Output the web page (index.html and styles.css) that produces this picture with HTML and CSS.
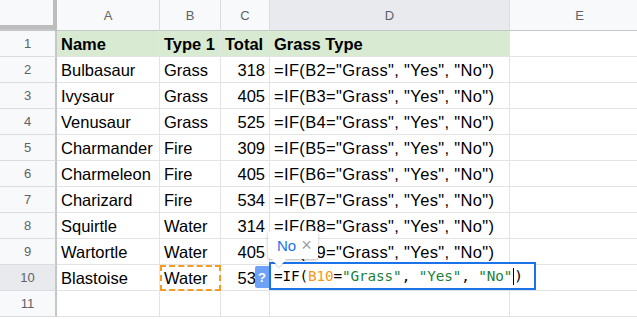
FILE: index.html
```html
<!DOCTYPE html>
<html lang="en">
<head>
    <meta charset="UTF-8">
    <meta name="viewport" content="width=device-width, initial-scale=1.0">
    <title>Pokemon Sheet</title>
    <link rel="stylesheet" href="styles.css">
</head>
<body>
    <div class="sheet" id="sheet">
        <div class="corner"></div>
        <div class="col-head">A</div>
        <div class="col-head">B</div>
        <div class="col-head">C</div>
        <div class="col-head active">D</div>
        <div class="col-head">E</div>
    </div>

    <script>
        // Rows of the sheet: name, type, total
        const rows = [
            ['Bulbasaur', 'Grass', 318],
            ['Ivysaur', 'Grass', 405],
            ['Venusaur', 'Grass', 525],
            ['Charmander', 'Fire', 309],
            ['Charmeleon', 'Fire', 405],
            ['Charizard', 'Fire', 534],
            ['Squirtle', 'Water', 314],
            ['Wartortle', 'Water', 405],
            ['Blastoise', 'Water', 530]
        ];

        function buildSheet() {
            const sheet = document.getElementById('sheet');
            let html = `
                <div class="row-head">1</div>
                <div class="cell head">Name</div>
                <div class="cell head">Type 1</div>
                <div class="cell head">Total</div>
                <div class="cell head">Grass Type</div>
                <div class="cell"></div>`;

            rows.forEach((item, i) => {
                const n = i + 2;
                const last = n === 10;
                let formula = `=IF(B${n}="Grass", "Yes", "No")`;
                if (last) {
                    formula = `
                        <div class="hint">No <span class="hint-x">×</span></div>
                        <div class="hint-q">?</div>
                        <div class="editor"><span>=IF(</span><span class="ref">B10</span><span>=</span><span class="str">"Grass"</span><span>, </span><span class="str">"Yes"</span><span>, </span><span class="str">"No"</span><span class="caret"></span><span>)</span></div>`;
                }
                html += `
                    <div class="row-head${last ? ' active' : ''}">${n}</div>
                    <div class="cell">${item[0]}</div>
                    <div class="cell${last ? ' copied' : ''}">${item[1]}</div>
                    <div class="cell num">${item[2]}</div>
                    <div class="cell formula">${formula}</div>
                    <div class="cell"></div>`;
            });

            html += `
                <div class="row-head">11</div>
                <div class="cell"></div>
                <div class="cell"></div>
                <div class="cell"></div>
                <div class="cell"></div>
                <div class="cell"></div>`;

            sheet.innerHTML += html;
        }

        buildSheet();
    </script>
</body>
</html>
```

FILE: styles.css
```css
/* Spreadsheet grid */
body {
    margin: 0;
    background: #fff;
    font-family: "Liberation Sans", Arial, sans-serif;
    overflow: hidden;
}
.sheet {
    display: grid;
    grid-template-columns: 57px 103px 61px 49px 240px 140px;
    grid-template-rows: 31px repeat(11, 26px);
}
.corner {
    position: relative;
    background: #f8f9fa;
    border-right: 4px solid #bdbdbd;
    border-bottom: 2px solid #c4c7c5;
}
.corner::after {
    content: "";
    position: absolute;
    left: 0;
    right: 0;
    top: 25px;
    height: 4px;
    background: #bdbdbd;
}
.col-head {
    display: flex;
    align-items: center;
    justify-content: center;
    background: #f8f9fa;
    color: #5f6368;
    font-size: 13px;
    border-right: 1px solid #dadce0;
    border-bottom: 1px solid #c4c7c5;
}
.row-head {
    display: flex;
    align-items: center;
    justify-content: center;
    background: #f8f9fa;
    color: #5f6368;
    font-size: 13px;
    border-right: 2px solid #c4c7c5;
    border-bottom: 1px solid #dadce0;
}
.col-head.active, .row-head.active {
    background: #e8eaed;
}
.cell {
    display: flex;
    align-items: center;
    padding: 2px 4px 0 4px;
    font-size: 16.5px;
    color: #000;
    white-space: nowrap;
    border-right: 1px solid #e2e3e3;
    border-bottom: 1px solid #e2e3e3;
}
.cell.head {
    background: #d9ead3;
    font-weight: bold;
}
.cell.num {
    justify-content: flex-end;
}
.cell.formula {
    position: relative;
    letter-spacing: 0.35px;
}
.cell.copied {
    outline: 2px dashed #f59a23;
    outline-offset: -2px;
}

/* Formula editor overlay */
.editor {
    position: absolute;
    left: -1px;
    top: -3px;
    width: 260px;
    height: 24px;
    display: flex;
    align-items: center;
    padding-left: 3px;
    background: #fff;
    border: 2px solid #1a73e8;
    font-family: "DejaVu Sans Mono", monospace;
    font-size: 14.3px;
    letter-spacing: -0.1px;
    color: #000;
    white-space: pre;
    z-index: 2;
}
.ref {
    color: #f7981d;
}
.str {
    color: #188038;
}
.caret {
    display: inline-block;
    width: 1px;
    height: 17px;
    margin-left: 1px;
    background: #000;
}
.hint-q {
    position: absolute;
    left: -15px;
    top: 1px;
    width: 14px;
    height: 22px;
    border-radius: 2px 0 0 2px;
    background: #6ea2f7;
    color: #fff;
    font-weight: bold;
    font-size: 13px;
    letter-spacing: 0;
    display: flex;
    align-items: center;
    justify-content: center;
    z-index: 3;
}
.hint {
    position: absolute;
    left: -2px;
    top: -34px;
    width: 50px;
    height: 28px;
    padding-left: 9px;
    box-sizing: border-box;
    display: flex;
    align-items: center;
    gap: 5px;
    background: #fff;
    border-radius: 3px;
    box-shadow: 0 1px 3px rgba(0, 0, 0, 0.3);
    color: #1a73e8;
    font-size: 15px;
    letter-spacing: 0;
    z-index: 3;
}
.hint::after {
    content: "";
    position: absolute;
    left: 6px;
    bottom: -6px;
    width: 10px;
    height: 10px;
    background: #fff;
    transform: rotate(45deg);
    box-shadow: 1px 1px 1px rgba(0, 0, 0, 0.15);
}
.hint-x {
    color: #9aa0a6;
    font-size: 18px;
}
```
